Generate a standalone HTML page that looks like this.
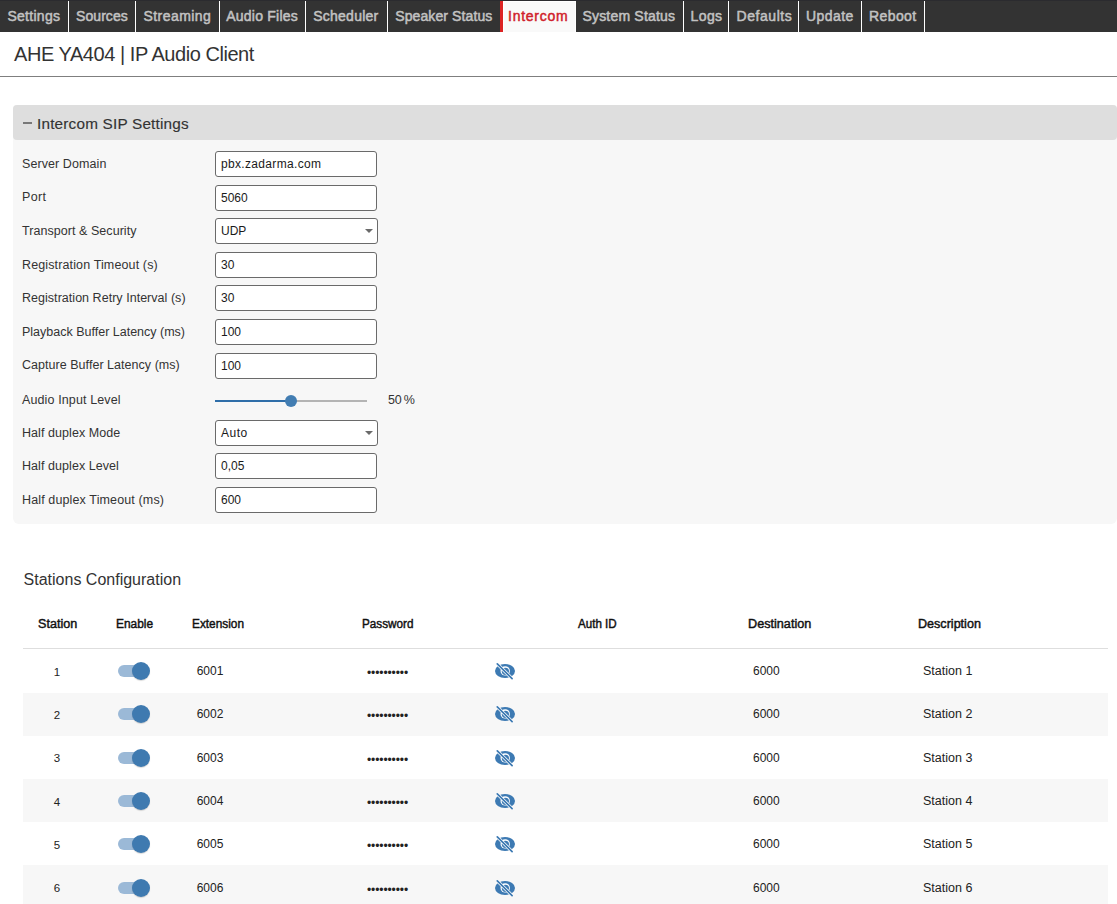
<!DOCTYPE html>
<html><head><meta charset="utf-8">
<style>
*{box-sizing:border-box;margin:0;padding:0}
html,body{width:1117px;height:904px;overflow:hidden;background:#fff;font-family:"Liberation Sans",sans-serif;color:#333}
.abs{position:absolute}
#nav{position:absolute;left:0;top:0;width:1117px;height:32px;background:#333;border-top:1px solid #2b2b2f}
.tab{position:absolute;top:1px;height:31px;color:#c2c2c2;font-size:14px;letter-spacing:0.3px;line-height:31px;text-align:center;-webkit-text-stroke:0.5px #c2c2c2;white-space:nowrap}
.sep{position:absolute;top:1px;width:1px;height:31px;background:#fff}
#title{position:absolute;left:14px;top:42px;font-size:20px;letter-spacing:-0.45px;line-height:24px;color:#333;white-space:nowrap}
#hr{position:absolute;left:0;top:76px;width:1117px;height:1px;background:#7f7f7f}
#panel{position:absolute;left:13px;top:105px;width:1104px;height:419px;background:#f7f7f7;border-radius:4px 4px 6px 6px}
#phead{position:absolute;left:0;top:0;width:1104px;height:35px;background:#dedede;border-radius:4px}
.lbl{position:absolute;left:22px;font-size:12.5px;line-height:16px;color:#333;white-space:nowrap}
.inp{position:absolute;left:215px;width:162px;height:26px;background:#fff;border:1px solid #6a6a6a;border-radius:3px;font-size:12px;line-height:24px;padding-left:5px;color:#1a1a1a;white-space:nowrap}
.th{position:absolute;top:616px;font-size:12.5px;font-weight:normal;-webkit-text-stroke:0.45px #111;color:#111;white-space:nowrap;line-height:16px;transform-origin:0 0;transform:scaleX(.87)}
.row{position:absolute;left:23px;width:1085px;height:43px}
.cell{position:absolute;font-size:12.5px;line-height:16px;color:#222;white-space:nowrap}
</style></head><body>
<div id="nav"></div>
<div class="tab" style="left:0px;width:68px;text-align:left;padding-left:7.40px;letter-spacing:0.29px">Settings</div>
<div class="sep" style="left:68px"></div>
<div class="tab" style="left:69px;width:66px;text-align:left;padding-left:7.10px;letter-spacing:0.05px">Sources</div>
<div class="sep" style="left:135px"></div>
<div class="tab" style="left:136px;width:83px;text-align:left;padding-left:7.50px;letter-spacing:0.44px">Streaming</div>
<div class="sep" style="left:219px"></div>
<div class="tab" style="left:220px;width:85px;text-align:left;padding-left:6.20px;letter-spacing:0.23px">Audio Files</div>
<div class="sep" style="left:305px"></div>
<div class="tab" style="left:306px;width:81px;text-align:left;padding-left:7.20px;letter-spacing:0.25px">Scheduler</div>
<div class="sep" style="left:387px"></div>
<div class="tab" style="left:388px;width:112px;text-align:left;padding-left:7.20px;letter-spacing:0.11px">Speaker Status</div>
<div class="tab" style="left:576px;width:107px;text-align:left;padding-left:6.40px;letter-spacing:0.2px">System Status</div>
<div class="sep" style="left:683px"></div>
<div class="tab" style="left:684px;width:44px;text-align:left;padding-left:6.60px;letter-spacing:0.37px">Logs</div>
<div class="sep" style="left:728px"></div>
<div class="tab" style="left:729px;width:69px;text-align:left;padding-left:7.50px;letter-spacing:0.56px">Defaults</div>
<div class="sep" style="left:798px"></div>
<div class="tab" style="left:799px;width:62px;text-align:left;padding-left:7.10px;letter-spacing:0.42px">Update</div>
<div class="sep" style="left:861px"></div>
<div class="tab" style="left:862px;width:62px;text-align:left;padding-left:6.90px;letter-spacing:0.44px">Reboot</div>
<div class="sep" style="left:924px"></div>
<div class="abs" style="left:500px;top:1px;width:3px;height:31px;background:#dc2323"></div>
<div class="tab" style="left:503px;width:72px;background:#f9f9f9;color:#d0202a;-webkit-text-stroke:0.45px #d0202a;letter-spacing:0.75px;text-align:left;padding-left:4px;border-top:1px solid #fff;border-left:1px solid #fff;line-height:29px">Intercom</div><div class="sep" style="left:575px"></div>
<div id="title">AHE YA404 | IP Audio Client</div>
<div id="hr"></div>
<div id="panel"><div id="phead"><div class="abs" style="left:10px;top:17px;width:9px;height:2px;background:#787878"></div><div class="abs" style="left:24px;top:9px;font-size:15.3px;letter-spacing:0.2px;line-height:20px;color:#333;white-space:nowrap;-webkit-text-stroke:0.15px #333">Intercom SIP Settings</div></div></div>
<div class="lbl" style="top:155.7px;letter-spacing:0.083px">Server Domain</div>
<div class="inp" style="top:151.0px;width:162px;letter-spacing:0.33px">pbx.zadarma.com</div>
<div class="lbl" style="top:189.3px;letter-spacing:0.333px">Port</div>
<div class="inp" style="top:184.6px;width:162px;letter-spacing:0px">5060</div>
<div class="lbl" style="top:222.9px;letter-spacing:0.053px">Transport &amp; Security</div>
<div class="inp" style="top:218.2px;width:163px;letter-spacing:0px">UDP<div class="abs" style="right:4px;top:10px;width:0;height:0;border-left:4px solid transparent;border-right:4px solid transparent;border-top:4px solid #6a6a6a"></div></div>
<div class="lbl" style="top:256.5px;letter-spacing:0.130px">Registration Timeout (s)</div>
<div class="inp" style="top:251.8px;width:162px;letter-spacing:0px">30</div>
<div class="lbl" style="top:290.1px;letter-spacing:0.033px">Registration Retry Interval (s)</div>
<div class="inp" style="top:285.4px;width:162px;letter-spacing:0px">30</div>
<div class="lbl" style="top:323.7px;letter-spacing:0.000px">Playback Buffer Latency (ms)</div>
<div class="inp" style="top:319.0px;width:162px;letter-spacing:0px">100</div>
<div class="lbl" style="top:357.3px;letter-spacing:0.038px">Capture Buffer Latency (ms)</div>
<div class="inp" style="top:352.6px;width:162px;letter-spacing:0px">100</div>
<div class="lbl" style="top:391.7px;letter-spacing:0.125px">Audio Input Level</div>
<div class="abs" style="left:215px;top:400px;width:76px;height:2px;background:#2f6ea9"></div>
<div class="abs" style="left:291px;top:400px;width:76px;height:2px;background:#b4b4b4"></div>
<div class="abs" style="left:284.7px;top:394.5px;width:12.6px;height:12.6px;border-radius:50%;background:#427db2"></div>
<div class="lbl" style="left:388px;top:391.7px;letter-spacing:-0.2px">50&#8201;%</div>
<div class="lbl" style="top:424.5px;letter-spacing:0.067px">Half duplex Mode</div>
<div class="inp" style="top:419.8px;width:163px;letter-spacing:0.5px">Auto<div class="abs" style="right:4px;top:10px;width:0;height:0;border-left:4px solid transparent;border-right:4px solid transparent;border-top:4px solid #6a6a6a"></div></div>
<div class="lbl" style="top:458.1px;letter-spacing:0.062px">Half duplex Level</div>
<div class="inp" style="top:453.4px;width:162px;letter-spacing:0px">0,05</div>
<div class="lbl" style="top:491.7px;letter-spacing:0.130px">Half duplex Timeout (ms)</div>
<div class="inp" style="top:487.0px;width:162px;letter-spacing:0px">600</div>
<div class="abs" style="left:23.6px;top:570.2px;font-size:16px;line-height:20px;color:#333;white-space:nowrap">Stations Configuration</div>
<div class="th" style="left:37.7px;transform:scaleX(1.007)">Station</div>
<div class="th" style="left:115.8px;transform:scaleX(0.953)">Enable</div>
<div class="th" style="left:191.7px;transform:scaleX(0.947)">Extension</div>
<div class="th" style="left:362px;transform:scaleX(0.937)">Password</div>
<div class="th" style="left:577.7px;transform:scaleX(0.928)">Auth ID</div>
<div class="th" style="left:748px;transform:scaleX(1.012)">Destination</div>
<div class="th" style="left:918px;transform:scaleX(1.006)">Description</div>
<div class="abs" style="left:23px;top:648px;width:1085px;height:1px;background:#dedede"></div>
<div class="row" style="top:650px;background:#fff"><div class="abs" style="left:0;top:0px;width:1085px;height:43px">
<div class="cell" style="left:30.8px;top:13.5px;font-size:11.5px">1</div>
<div class="abs" style="left:95px;top:15px;width:30px;height:12px;border-radius:6px;background:#9bb9d7"></div>
<div class="abs" style="left:109.2px;top:12px;width:18px;height:18px;border-radius:50%;background:#3f7ab0;box-shadow:0 1px 1px rgba(0,0,0,.15)"></div>
<div class="cell" style="left:173.7px;top:13px;font-size:12px">6001</div>
<div class="cell" style="left:344px;top:15px;font-size:12px;letter-spacing:-0.1px">&#8226;&#8226;&#8226;&#8226;&#8226;&#8226;&#8226;&#8226;&#8226;&#8226;</div>
<svg class="abs" style="left:471px;top:12px" width="22" height="19" viewBox="0 0 22 19">
<ellipse cx="11" cy="9" rx="10" ry="7" fill="#3d7ab3"/>
<circle cx="11.2" cy="8.9" r="4.7" fill="#fff"/>
<circle cx="11.4" cy="9.3" r="3.6" fill="#3d7ab3"/>
<line x1="3.3" y1="1.9" x2="18.1" y2="16.6" stroke="#fff" stroke-width="3.2"/>
<line x1="3.3" y1="1.9" x2="18.1" y2="16.6" stroke="#3d7ab3" stroke-width="1.7" stroke-linecap="round"/>
</svg>
<div class="cell" style="left:730px;top:13px;font-size:12px">6000</div>
<div class="cell" style="left:900px;top:13px">Station 1</div>
</div></div>
<div class="row" style="top:693px;background:#f7f7f7"><div class="abs" style="left:0;top:0px;width:1085px;height:43px">
<div class="cell" style="left:30.8px;top:13.5px;font-size:11.5px">2</div>
<div class="abs" style="left:95px;top:15px;width:30px;height:12px;border-radius:6px;background:#9bb9d7"></div>
<div class="abs" style="left:109.2px;top:12px;width:18px;height:18px;border-radius:50%;background:#3f7ab0;box-shadow:0 1px 1px rgba(0,0,0,.15)"></div>
<div class="cell" style="left:173.7px;top:13px;font-size:12px">6002</div>
<div class="cell" style="left:344px;top:15px;font-size:12px;letter-spacing:-0.1px">&#8226;&#8226;&#8226;&#8226;&#8226;&#8226;&#8226;&#8226;&#8226;&#8226;</div>
<svg class="abs" style="left:471px;top:12px" width="22" height="19" viewBox="0 0 22 19">
<ellipse cx="11" cy="9" rx="10" ry="7" fill="#3d7ab3"/>
<circle cx="11.2" cy="8.9" r="4.7" fill="#fff"/>
<circle cx="11.4" cy="9.3" r="3.6" fill="#3d7ab3"/>
<line x1="3.3" y1="1.9" x2="18.1" y2="16.6" stroke="#fff" stroke-width="3.2"/>
<line x1="3.3" y1="1.9" x2="18.1" y2="16.6" stroke="#3d7ab3" stroke-width="1.7" stroke-linecap="round"/>
</svg>
<div class="cell" style="left:730px;top:13px;font-size:12px">6000</div>
<div class="cell" style="left:900px;top:13px">Station 2</div>
</div></div>
<div class="row" style="top:736px;background:#fff"><div class="abs" style="left:0;top:0.5px;width:1085px;height:43px">
<div class="cell" style="left:30.8px;top:13.5px;font-size:11.5px">3</div>
<div class="abs" style="left:95px;top:15px;width:30px;height:12px;border-radius:6px;background:#9bb9d7"></div>
<div class="abs" style="left:109.2px;top:12px;width:18px;height:18px;border-radius:50%;background:#3f7ab0;box-shadow:0 1px 1px rgba(0,0,0,.15)"></div>
<div class="cell" style="left:173.7px;top:13px;font-size:12px">6003</div>
<div class="cell" style="left:344px;top:15px;font-size:12px;letter-spacing:-0.1px">&#8226;&#8226;&#8226;&#8226;&#8226;&#8226;&#8226;&#8226;&#8226;&#8226;</div>
<svg class="abs" style="left:471px;top:12px" width="22" height="19" viewBox="0 0 22 19">
<ellipse cx="11" cy="9" rx="10" ry="7" fill="#3d7ab3"/>
<circle cx="11.2" cy="8.9" r="4.7" fill="#fff"/>
<circle cx="11.4" cy="9.3" r="3.6" fill="#3d7ab3"/>
<line x1="3.3" y1="1.9" x2="18.1" y2="16.6" stroke="#fff" stroke-width="3.2"/>
<line x1="3.3" y1="1.9" x2="18.1" y2="16.6" stroke="#3d7ab3" stroke-width="1.7" stroke-linecap="round"/>
</svg>
<div class="cell" style="left:730px;top:13px;font-size:12px">6000</div>
<div class="cell" style="left:900px;top:13px">Station 3</div>
</div></div>
<div class="row" style="top:779px;background:#f7f7f7"><div class="abs" style="left:0;top:1px;width:1085px;height:43px">
<div class="cell" style="left:30.8px;top:13.5px;font-size:11.5px">4</div>
<div class="abs" style="left:95px;top:15px;width:30px;height:12px;border-radius:6px;background:#9bb9d7"></div>
<div class="abs" style="left:109.2px;top:12px;width:18px;height:18px;border-radius:50%;background:#3f7ab0;box-shadow:0 1px 1px rgba(0,0,0,.15)"></div>
<div class="cell" style="left:173.7px;top:13px;font-size:12px">6004</div>
<div class="cell" style="left:344px;top:15px;font-size:12px;letter-spacing:-0.1px">&#8226;&#8226;&#8226;&#8226;&#8226;&#8226;&#8226;&#8226;&#8226;&#8226;</div>
<svg class="abs" style="left:471px;top:12px" width="22" height="19" viewBox="0 0 22 19">
<ellipse cx="11" cy="9" rx="10" ry="7" fill="#3d7ab3"/>
<circle cx="11.2" cy="8.9" r="4.7" fill="#fff"/>
<circle cx="11.4" cy="9.3" r="3.6" fill="#3d7ab3"/>
<line x1="3.3" y1="1.9" x2="18.1" y2="16.6" stroke="#fff" stroke-width="3.2"/>
<line x1="3.3" y1="1.9" x2="18.1" y2="16.6" stroke="#3d7ab3" stroke-width="1.7" stroke-linecap="round"/>
</svg>
<div class="cell" style="left:730px;top:13px;font-size:12px">6000</div>
<div class="cell" style="left:900px;top:13px">Station 4</div>
</div></div>
<div class="row" style="top:822px;background:#fff"><div class="abs" style="left:0;top:1.3px;width:1085px;height:43px">
<div class="cell" style="left:30.8px;top:13.5px;font-size:11.5px">5</div>
<div class="abs" style="left:95px;top:15px;width:30px;height:12px;border-radius:6px;background:#9bb9d7"></div>
<div class="abs" style="left:109.2px;top:12px;width:18px;height:18px;border-radius:50%;background:#3f7ab0;box-shadow:0 1px 1px rgba(0,0,0,.15)"></div>
<div class="cell" style="left:173.7px;top:13px;font-size:12px">6005</div>
<div class="cell" style="left:344px;top:15px;font-size:12px;letter-spacing:-0.1px">&#8226;&#8226;&#8226;&#8226;&#8226;&#8226;&#8226;&#8226;&#8226;&#8226;</div>
<svg class="abs" style="left:471px;top:12px" width="22" height="19" viewBox="0 0 22 19">
<ellipse cx="11" cy="9" rx="10" ry="7" fill="#3d7ab3"/>
<circle cx="11.2" cy="8.9" r="4.7" fill="#fff"/>
<circle cx="11.4" cy="9.3" r="3.6" fill="#3d7ab3"/>
<line x1="3.3" y1="1.9" x2="18.1" y2="16.6" stroke="#fff" stroke-width="3.2"/>
<line x1="3.3" y1="1.9" x2="18.1" y2="16.6" stroke="#3d7ab3" stroke-width="1.7" stroke-linecap="round"/>
</svg>
<div class="cell" style="left:730px;top:13px;font-size:12px">6000</div>
<div class="cell" style="left:900px;top:13px">Station 5</div>
</div></div>
<div class="row" style="top:865px;background:#f7f7f7"><div class="abs" style="left:0;top:1.5px;width:1085px;height:43px">
<div class="cell" style="left:30.8px;top:13.5px;font-size:11.5px">6</div>
<div class="abs" style="left:95px;top:15px;width:30px;height:12px;border-radius:6px;background:#9bb9d7"></div>
<div class="abs" style="left:109.2px;top:12px;width:18px;height:18px;border-radius:50%;background:#3f7ab0;box-shadow:0 1px 1px rgba(0,0,0,.15)"></div>
<div class="cell" style="left:173.7px;top:13px;font-size:12px">6006</div>
<div class="cell" style="left:344px;top:15px;font-size:12px;letter-spacing:-0.1px">&#8226;&#8226;&#8226;&#8226;&#8226;&#8226;&#8226;&#8226;&#8226;&#8226;</div>
<svg class="abs" style="left:471px;top:12px" width="22" height="19" viewBox="0 0 22 19">
<ellipse cx="11" cy="9" rx="10" ry="7" fill="#3d7ab3"/>
<circle cx="11.2" cy="8.9" r="4.7" fill="#fff"/>
<circle cx="11.4" cy="9.3" r="3.6" fill="#3d7ab3"/>
<line x1="3.3" y1="1.9" x2="18.1" y2="16.6" stroke="#fff" stroke-width="3.2"/>
<line x1="3.3" y1="1.9" x2="18.1" y2="16.6" stroke="#3d7ab3" stroke-width="1.7" stroke-linecap="round"/>
</svg>
<div class="cell" style="left:730px;top:13px;font-size:12px">6000</div>
<div class="cell" style="left:900px;top:13px">Station 6</div>
</div></div>
</body></html>
